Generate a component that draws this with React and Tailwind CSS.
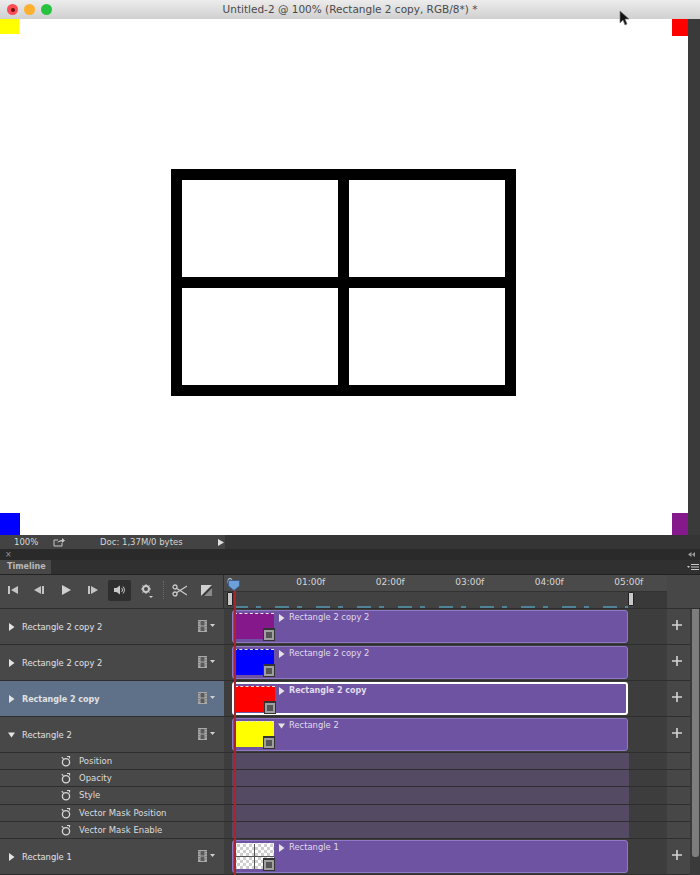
import React from 'react'

const font = { fontFamily: '"DejaVu Sans", sans-serif' }

function Tri({ down }) {
    return (
        <svg width="7" height="8" viewBox="0 0 7 8" className="shrink-0">
            {down ? <path d="M0 1.5h7L3.5 6.5z" fill="#e4e4e4" /> : <path d="M1 0l5.5 4L1 8z" fill="#e4e4e4" />}
        </svg>
    )
}

function Film() {
    return (
        <svg width="9" height="12" viewBox="0 0 9 12">
            <rect width="9" height="12" fill="#a9a9a9" />
            <rect x="2.5" y="1" width="4" height="4.5" fill="#5a5a5a" />
            <rect x="2.5" y="6.5" width="4" height="4.5" fill="#5a5a5a" />
            <path d="M.5 1.5h1M.5 4h1M.5 6.5h1M.5 9h1M7.5 1.5h1M7.5 4h1M7.5 6.5h1M7.5 9h1" stroke="#555" strokeWidth="1" />
        </svg>
    )
}

function Stopwatch() {
    return (
        <svg width="10" height="11" viewBox="0 0 10 11" className="shrink-0">
            <circle cx="5" cy="6.3" r="3.6" fill="none" stroke="#d8d8d8" strokeWidth="1.3" />
            <path d="M0.8 1.2l1.6 1.6M6 0.5h2.5v2" stroke="#d8d8d8" strokeWidth="1.2" fill="none" />
        </svg>
    )
}

function Plus() {
    return (
        <svg width="10" height="10" viewBox="0 0 10 10">
            <path d="M5 0v10M0 5h10" stroke="#d4d4d4" strokeWidth="1.6" />
        </svg>
    )
}

function FilmBadge() {
    return (
        <div className="absolute right-[-1px] bottom-[-2px] w-[12px] h-[13px] bg-[#333333] flex items-center justify-center">
            <div className="w-[10px] h-[10px] border-2 border-[#a0a0a0] bg-[#555555]" />
        </div>
    )
}

function Thumb({ color, checker }) {
    return (
        <div className={`relative w-[40px] h-[26px] border-t border-dashed border-[#e8e8e8] ${color}`}>
            {checker && (
                <div className="grid grid-cols-2 grid-rows-2 gap-[1px] h-full bg-[#555555]">
                    <div className="bg-[repeating-conic-gradient(#cfcfcf_0_25%,#ffffff_0_50%)] bg-[length:6px_6px]" />
                    <div className="bg-[repeating-conic-gradient(#cfcfcf_0_25%,#ffffff_0_50%)] bg-[length:6px_6px]" />
                    <div className="bg-[repeating-conic-gradient(#cfcfcf_0_25%,#ffffff_0_50%)] bg-[length:6px_6px]" />
                    <div className="bg-[repeating-conic-gradient(#cfcfcf_0_25%,#ffffff_0_50%)] bg-[length:6px_6px]" />
                </div>
            )}
            <FilmBadge />
        </div>
    )
}

function LayerRow({ name, color, checker, selected, open }) {
    return (
        <div className="flex h-[36px] border-b border-[#2e2e2e]">
            <div className={`w-[224px] shrink-0 flex items-center pl-[8px] pr-[8px] ${selected ? 'bg-[#5f7189]' : 'bg-[#484848]'}`}>
                <Tri down={open} />
                <span className={`ml-[7px] mt-[2px] text-[#e2e2e2] ${selected ? 'font-bold text-[8px]' : 'text-[8.4px]'}`}>{name}</span>
                <div className="ml-auto flex items-center gap-[3px] mr-[1px] mb-[2px]">
                    <Film />
                    <svg width="5" height="3" viewBox="0 0 5 3"><path d="M0 0h5L2.5 3z" fill="#d0d0d0" /></svg>
                </div>
            </div>
            <div className="w-[8px] bg-[#3d3d3d] shrink-0" />
            <div className="w-[396px] shrink-0 bg-[#3d3d3d] py-[1px]">
                <div className={`h-full rounded-[3px] bg-[#6e53a3] flex items-start pl-[1px] pt-[2px] ${selected ? 'border-2 border-white pl-0 pt-[1px]' : 'border border-[#9079c4]'}`}>
                    <Thumb color={color} checker={checker} />
                    <div className={`flex items-center gap-[4px] ${selected ? 'ml-[3px]' : 'ml-[4px]'}`}>
                        <Tri down={open} />
                        <span className={`leading-[9px] text-[#e0dbe9] ${selected ? 'font-bold text-[8px]' : 'text-[8.4px]'}`}>{name}</span>
                    </div>
                </div>
            </div>
            <div className="w-[39px] shrink-0 bg-[#3d3d3d]" />
            <div className="flex-1 bg-[#474747] flex items-center justify-center pr-[3px] pb-[4px]">
                <Plus />
            </div>
        </div>
    )
}

function PropRow({ name, height = 'h-[17px]' }) {
    return (
        <div className={`flex ${height} border-b border-[#2e2e2e]`}>
            <div className="w-[224px] shrink-0 bg-[#484848] flex items-center pl-[61px]">
                <Stopwatch />
                <span className="ml-[8px] text-[8.5px] text-[#dcdcdc]">{name}</span>
            </div>
            <div className="w-[8px] bg-[#3d3d3d] shrink-0" />
            <div className="w-[397px] shrink-0 bg-[#544a64]" />
            <div className="w-[38px] shrink-0 bg-[#3d3d3d]" />
            <div className="flex-1 bg-[#474747]" />
        </div>
    )
}

function Transport() {
    return (
        <div className="w-[224px] h-[33px] shrink-0 bg-[#484848] flex items-center border-r border-[#2e2e2e] pl-[8px] pb-[3px]">
            <svg width="10" height="8" viewBox="0 0 10 8"><path d="M0 0h2v8H0zM10 0v8L3 4z" fill="#c4c4c4" /></svg>
            <svg className="ml-[16px]" width="10" height="8" viewBox="0 0 10 8"><path d="M7 0v8L0 4zM8 0h2v8H8z" fill="#c4c4c4" /></svg>
            <svg className="ml-[18px]" width="9" height="10" viewBox="0 0 9 10"><path d="M0 0l9 5-9 5z" fill="#d0d0d0" /></svg>
            <svg className="ml-[17px]" width="10" height="8" viewBox="0 0 10 8"><path d="M0 0h2v8H0zM3 0l7 4-7 4z" fill="#c4c4c4" /></svg>
            <div className="ml-[10px] w-[23px] h-[21px] rounded-[2px] bg-[#2f2f2f] flex items-center justify-center">
                <svg width="12" height="10" viewBox="0 0 12 10">
                    <path d="M0 3h2.5L6 .5v9L2.5 7H0z" fill="#c8c8c8" />
                    <path d="M7.5 3a2.6 2.6 0 010 4M9 1.5a5 5 0 010 7" stroke="#c8c8c8" fill="none" />
                </svg>
            </div>
            <div className="relative ml-[10px] w-[12px] h-[12px]">
                <svg width="10" height="10" viewBox="0 0 10 10">
                    <circle cx="5" cy="5" r="3" fill="none" stroke="#c8c8c8" strokeWidth="2" />
                    <path d="M5 0v2M5 8v2M0 5h2M8 5h2M1.5 1.5l1.3 1.3M7.2 7.2l1.3 1.3M8.5 1.5L7.2 2.8M2.8 7.2L1.5 8.5" stroke="#c8c8c8" />
                </svg>
                <svg className="absolute left-[8px] top-[12px]" width="4" height="2" viewBox="0 0 4 2"><path d="M0 0h4L2 2z" fill="#d0d0d0" /></svg>
            </div>
            <div className="ml-[10px] h-[18px] border-l border-dotted border-[#6a6a6a]" />
            <svg className="ml-[8px]" width="15" height="13" viewBox="0 0 15 13">
                <circle cx="3" cy="3" r="2" fill="none" stroke="#c8c8c8" strokeWidth="1.3" />
                <circle cx="3" cy="10" r="2" fill="none" stroke="#c8c8c8" strokeWidth="1.3" />
                <path d="M4.5 4.2L15 11M4.5 8.8L15 2" stroke="#c8c8c8" strokeWidth="1.3" />
            </svg>
            <svg className="ml-[14px]" width="11" height="11" viewBox="0 0 11 11">
                <rect width="11" height="11" fill="#d0d0d0" />
                <path d="M11 0v11H0z" fill="#3a3a3a" />
                <path d="M11 3v8H3z" fill="#8a8a8a" />
            </svg>
        </div>
    )
}

function Ruler() {
    const ticks = ['01:00f', '02:00f', '03:00f', '04:00f', '05:00f']
    return (
        <div className="flex-1 h-[33px] bg-[#484848] flex">
            <div className="w-[443px] shrink-0">
                <div className="h-[17px] flex pl-[3px] bg-[#4a4a4a] border-b border-[#333333]">
                    <div className="w-[6px] shrink-0 text-[9px] leading-[15px] text-[#d6d6d6]">0</div>
                    <div className="w-[38px] shrink-0" />
                    {ticks.map(t => (
                        <div key={t} className="w-[79.5px] shrink-0 text-center text-[9px] leading-[15px] text-[#d6d6d6]">{t}</div>
                    ))}
                </div>
                <div className="h-[16px] bg-[#424242] relative">
                    <div className="absolute left-[3px] top-0 w-[6px] h-[14px] rounded-[1px] bg-[#c8c8c8] border border-[#222222]" />
                    <div className="absolute left-[404px] top-0 w-[6px] h-[14px] rounded-[1px] bg-[#c8c8c8] border border-[#222222]" />
                    <div className="absolute left-[410px] right-0 top-0 bottom-0 bg-[#393939]" />
                    <div className="absolute left-[10px] right-[39px] bottom-0 h-[2px] bg-[repeating-linear-gradient(90deg,#4f8496_0_14px,transparent_14px_22px,#4f8496_22px_27px,transparent_27px_41px)]" />
                </div>
            </div>
            <div className="flex-1 bg-[#474747]" />
        </div>
    )
}

export default function App() {
    return (
        <div className="w-[700px] h-[875px] overflow-hidden relative bg-[#3a3a3a]" style={font}>
            {/* window title */}
            <div className="h-[19px] bg-gradient-to-b from-[#ececec] to-[#d0d0d0] flex items-center relative">
                <div className="flex items-center gap-[6px] pl-[7px]">
                    <div className="w-[11px] h-[11px] rounded-full bg-[#fb4b55] flex items-center justify-center">
                        <div className="w-[4px] h-[4px] rounded-full bg-[#6e0d12]" />
                    </div>
                    <div className="w-[11px] h-[11px] rounded-full bg-[#fdb02e]" />
                    <div className="w-[11px] h-[11px] rounded-full bg-[#27c23f]" />
                </div>
                <div className="flex-1 text-center text-[10.5px] text-[#4a4a4a] pr-[52px]">Untitled-2 @ 100% (Rectangle 2 copy, RGB/8*) *</div>
            </div>

            {/* canvas */}
            <div className="flex h-[516px]">
                <div className="w-[688px] bg-white flex flex-col">
                    <div className="flex justify-between h-[17px] items-start">
                        <div className="w-[19px] h-[15px] bg-[#ffff00]" />
                        <div className="w-[16px] h-[17px] bg-[#ff0000]" />
                    </div>
                    <div className="h-[133px]" />
                    <div className="ml-[171px] w-[345px] h-[227px] bg-black p-[11px] grid grid-cols-2 grid-rows-2 gap-[11px]">
                        <div className="bg-white" />
                        <div className="bg-white" />
                        <div className="bg-white" />
                        <div className="bg-white" />
                    </div>
                    <div className="flex-1" />
                    <div className="flex justify-between items-end h-[22px]">
                        <div className="w-[20px] h-[22px] bg-[#0000ff]" />
                        <div className="w-[16px] h-[22px] bg-[#85188a]" />
                    </div>
                </div>
                <div className="flex-1 bg-[#3a3a3a]" />
            </div>

            {/* status bar */}
            <div className="h-[14px] flex bg-[#2c2c2c]">
                <div className="w-[225px] bg-[#434343] flex items-center text-[8.5px] text-[#d8d8d8]">
                    <span className="ml-[14px] w-[39px]">100%</span>
                    <svg width="12" height="10" viewBox="0 0 12 10">
                        <path d="M1 3h4M1 3v6h8V6" stroke="#c8c8c8" fill="none" />
                        <path d="M4 6c1-2 3-3 5-3V1l3 2.5L9 6V4.5C7 4.5 5.5 5 4 6z" fill="#c8c8c8" />
                    </svg>
                    <span className="ml-[35px] text-[8.5px] text-[#d4d4d4]">Doc: 1,37M/0 bytes</span>
                    <svg className="ml-auto mr-[1px]" width="6" height="7" viewBox="0 0 6 7"><path d="M0 0l6 3.5L0 7z" fill="#e0e0e0" /></svg>
                </div>
                <div className="flex-1 bg-[#353535]" />
            </div>

            {/* panel strip */}
            <div className="h-[11px] bg-[#2a2a2a] flex items-center justify-between px-[5px]">
                <span className="text-[8px] leading-[8px] text-[#9a9a9a]">×</span>
                <svg width="7" height="5" viewBox="0 0 7 5"><path d="M3.5 0v5L0 2.5zM7 0v5L4 2.5z" fill="#9a9a9a" /></svg>
            </div>
            <div className="h-[15px] bg-[#303030] flex border-b border-[#222222]">
                <div className="w-[51px] bg-[#484848] text-[8px] font-bold leading-[14px] pl-[7px] text-[#b9b9b9]">Timeline</div>
                <div className="ml-auto pr-[1px] flex items-center gap-[1px]">
                    <svg width="3" height="2" viewBox="0 0 3 2"><path d="M0 0h3L1.5 2z" fill="#c8c8c8" /></svg>
                    <svg width="8" height="6" viewBox="0 0 8 6"><path d="M0 .5h8M0 3h8M0 5.5h8" stroke="#c8c8c8" /></svg>
                </div>
            </div>

            {/* timeline */}
            <div className="relative">
                <div className="flex border-b border-[#2e2e2e]">
                    <Transport />
                    <Ruler />
                </div>
                <div className="flex">
                    <div className="w-[690px] shrink-0">
                        <LayerRow name="Rectangle 2 copy 2" color="bg-[#85188a]" />
                        <LayerRow name="Rectangle 2 copy 2" color="bg-[#0000ff]" />
                        <LayerRow name="Rectangle 2 copy" color="bg-[#ff0000]" selected />
                        <LayerRow name="Rectangle 2" color="bg-[#ffff00]" open />
                        <PropRow name="Position" />
                        <PropRow name="Opacity" />
                        <PropRow name="Style" height="h-[18px]" />
                        <PropRow name="Vector Mask Position" />
                        <PropRow name="Vector Mask Enable" />
                        <LayerRow name="Rectangle 1" color="bg-white" checker />
                    </div>
                    <div className="flex-1 bg-[#3a3a3a] pl-[2px] pr-[1px]">
                        <div className="h-[248px] rounded-b-[3px] bg-[#7d7d7d]" />
                    </div>
                </div>

                {/* playhead */}
                <div className="absolute left-[234px] top-[15px] bottom-0 w-[2px] bg-[#a82530]" />
                <svg className="absolute left-[228px] top-[5px]" width="12" height="11" viewBox="0 0 12 11">
                    <path d="M.5.5h11v5.500L6 10.500.5 6z" fill="#6d9fd8" stroke="#3c5f90" />
                </svg>
            </div>

            {/* mouse pointer */}
            <svg className="absolute left-[619px] top-[10px]" width="11" height="16" viewBox="0 0 11 16">
                <path d="M1 1v12l3-3 2 5 2-1-2-5h4z" fill="#111111" stroke="#777777" strokeWidth=".7" />
            </svg>
        </div>
    )
}
